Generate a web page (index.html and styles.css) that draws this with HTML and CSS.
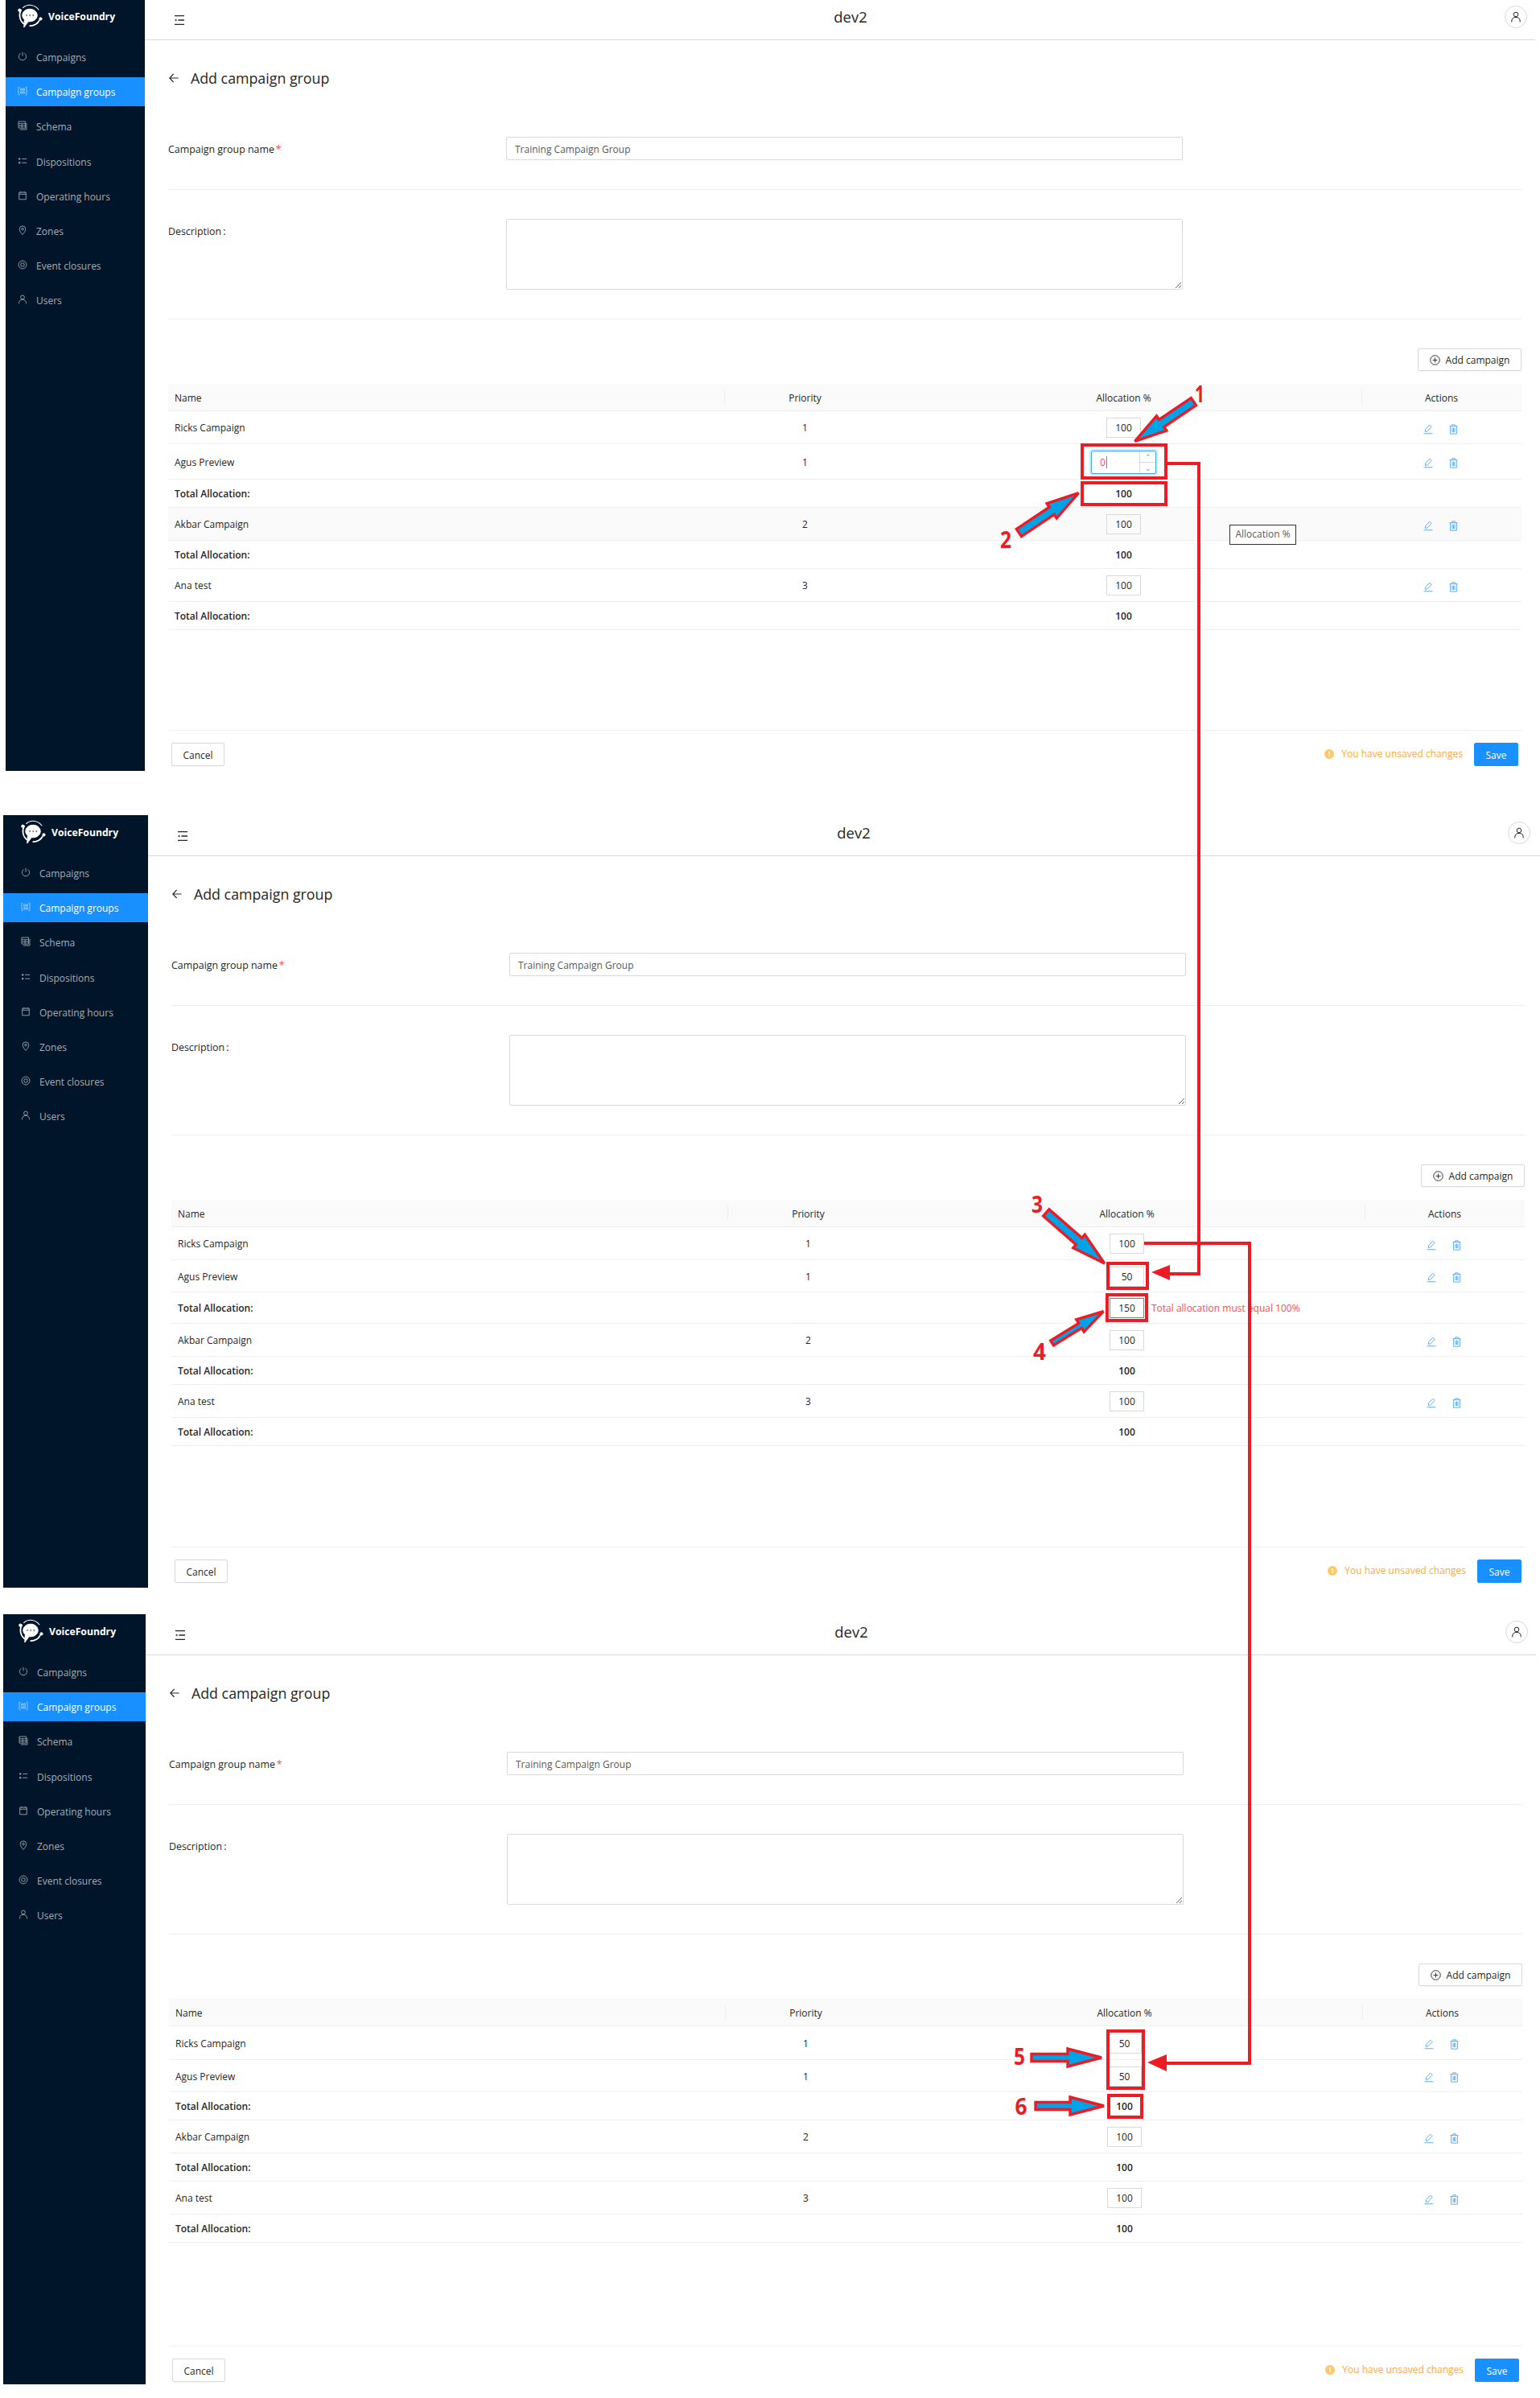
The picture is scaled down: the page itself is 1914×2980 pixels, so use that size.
FILE: index.html
```html
<!DOCTYPE html>
<html lang="en">
<head>
  <meta charset="UTF-8">
  <title>Add campaign group</title>
  <link rel="stylesheet" href="styles.css">
</head>
<body>

  <!-- ICONS -->
  <svg class="defs" width="0" height="0">
    <symbol id="i-logo" viewBox="0 0 32 30">
      <path d="M6.5 4.5 A13.5 13.5 0 0 1 27 7" fill="none" stroke="#fff" stroke-width="1.1"/>
      <path d="M4.5 6.5 C.8 13 2.5 21 8 25 M15 27.6 C21 28 26 24.5 28 20" fill="none" stroke="#fff" stroke-width="1.8"/>
      <path d="M15.5 6 C21 6 25 9.6 25 14 C25 18.4 21 22 15.5 22 L13.6 22 L8 29.5 L8.6 19.4 C6.8 18 6 16 6 14 C6 9.6 10 6 15.5 6 Z" fill="#fff"/>
      <circle cx="11.4" cy="14" r="1.3" fill="#001529"/>
      <circle cx="15.6" cy="14" r="1.3" fill="#001529"/>
      <circle cx="19.8" cy="14" r="1.3" fill="#001529"/>
      <circle cx="2.4" cy="7.5" r="1.7" fill="#fff"/>
      <circle cx="29.4" cy="18.5" r="1.7" fill="#fff"/>
    </symbol>
    <symbol id="i-power" viewBox="0 0 14 14">
      <path d="M4.2 2.6 A5.4 5.4 0 1 0 9.8 2.6 M7 1 V6.5"/>
    </symbol>
    <symbol id="i-groups" viewBox="0 0 14 14">
      <path d="M3 1.5 H1.2 V12.5 H3 M11 1.5 H12.8 V12.5 H11"/>
      <path d="M4.2 3.5 H6.2 V6 H4.2 Z M7.8 3.5 H9.8 V6 H7.8 Z M4.2 8 H6.2 V10.5 H4.2 Z M7.8 8 H9.8 V10.5 H7.8 Z"/>
    </symbol>
    <symbol id="i-schema" viewBox="0 0 14 14">
      <path d="M1.2 1.2 H11 V10.6 H1.2 Z M1.2 4.4 H11 M1.2 7.5 H11 M6 4.4 V10.6 M12.8 3.4 V12.8 H3.4"/>
    </symbol>
    <symbol id="i-list" viewBox="0 0 14 14">
      <path d="M6 4 H13 M6 9.6 H13"/>
      <rect x="1.4" y="2.8" width="2.4" height="2.4" fill="currentColor" stroke="none"/>
      <rect x="1.4" y="8.4" width="2.4" height="2.4" fill="currentColor" stroke="none"/>
    </symbol>
    <symbol id="i-cal" viewBox="0 0 14 14">
      <path d="M2 2.4 H12 V12.6 H2 Z M2 5 H12 M4.4 1 V3 M9.6 1 V3"/>
    </symbol>
    <symbol id="i-pin" viewBox="0 0 14 14">
      <path d="M7 13.4 C4.4 10.4 2.6 8 2.6 5.4 A4.4 4.4 0 0 1 11.4 5.4 C11.4 8 9.6 10.4 7 13.4 Z"/>
      <circle cx="7" cy="5.4" r="1.5"/>
    </symbol>
    <symbol id="i-target" viewBox="0 0 14 14">
      <circle cx="7" cy="7" r="5.8"/>
      <rect x="4.6" y="4.6" width="4.8" height="4.8" rx="1.2"/>
    </symbol>
    <symbol id="i-user" viewBox="0 0 14 14">
      <circle cx="7" cy="4" r="2.8"/>
      <path d="M1.8 13.4 V12 C1.8 9.2 4 7.4 7 7.4 C10 7.4 12.2 9.2 12.2 12 V13.4"/>
    </symbol>
    <symbol id="i-fold" viewBox="0 0 12 12">
      <path d="M0 .6 H12 M4.4 6 H12 M0 11.4 H12" stroke-width="1.3"/>
      <path d="M0 6 L2.4 4.4 V7.6 Z" fill="currentColor" stroke="none"/>
    </symbol>
    <symbol id="i-back" viewBox="0 0 12 12">
      <path d="M11.6 6 H.8 M5.6 1 L.8 6 L5.6 11" stroke-width="1.1"/>
    </symbol>
    <symbol id="i-plus" viewBox="0 0 14 14">
      <circle cx="7" cy="7" r="6.2"/>
      <path d="M7 3.8 V10.2 M3.8 7 H10.2"/>
    </symbol>
    <symbol id="i-edit" viewBox="0 0 13 13">
      <path d="M2.4 9.6 L2.8 6.6 L8.6 .8 L11 3.2 L5.2 9.2 Z M.6 12.2 H12.4"/>
    </symbol>
    <symbol id="i-trash" viewBox="0 0 12 14">
      <path d="M.6 2.8 H11.4 M4 2.6 V.8 H8 V2.6 M1.8 2.8 V13.2 H10.2 V2.8 M4.4 5 V11 M6 5 V11 M7.6 5 V11"/>
    </symbol>
  </svg>

  <!-- PANEL 1 -->
  <section class="panel panel-a">
    <aside class="side">
      <div class="brand"><svg class="logo"><use href="#i-logo"/></svg><span>VoiceFoundry</span></div>
      <ul class="menu">
        <li><svg class="ic"><use href="#i-power"/></svg>Campaigns</li>
        <li class="active"><svg class="ic"><use href="#i-groups"/></svg>Campaign groups</li>
        <li><svg class="ic"><use href="#i-schema"/></svg>Schema</li>
        <li><svg class="ic"><use href="#i-list"/></svg>Dispositions</li>
        <li><svg class="ic"><use href="#i-cal"/></svg>Operating hours</li>
        <li><svg class="ic"><use href="#i-pin"/></svg>Zones</li>
        <li><svg class="ic"><use href="#i-target"/></svg>Event closures</li>
        <li><svg class="ic"><use href="#i-user"/></svg>Users</li>
      </ul>
    </aside>
    <div class="main">
      <header class="top">
        <svg class="fold"><use href="#i-fold"/></svg>
        <div class="env">dev2</div>
        <div class="avatar"><svg><use href="#i-user"/></svg></div>
      </header>
      <div class="content">
        <h1 class="title"><svg class="back"><use href="#i-back"/></svg>Add campaign group</h1>
        <div class="field field-name">
          <label>Campaign group name<span class="req">*</span></label>
          <div class="input">Training Campaign Group</div>
        </div>
        <div class="field field-desc">
          <label>Description<span class="colon">:</span></label>
          <textarea></textarea>
        </div>
        <div class="tools"><div class="btn"><svg class="ic-plus"><use href="#i-plus"/></svg>Add campaign</div></div>
        <table class="grid">
          <thead>
            <tr><th>Name</th><th class="c sep">Priority</th><th class="c">Allocation %</th><th class="c sep">Actions</th></tr>
          </thead>
          <tbody>
            <tr class="h41"><td>Ricks Campaign</td><td class="c">1</td><td class="c"><span class="num">100</span></td><td class="c"><span class="acts"><svg class="edit"><use href="#i-edit"/></svg><svg class="trash"><use href="#i-trash"/></svg></span></td></tr>
            <tr class="h44"><td>Agus Preview</td><td class="c">1</td><td class="c"><span class="num-focus"><span class="val">0</span><span class="steps"><span>&#8963;</span><span>&#8964;</span></span></span></td><td class="c"><span class="acts"><svg class="edit"><use href="#i-edit"/></svg><svg class="trash"><use href="#i-trash"/></svg></span></td></tr>
            <tr class="h35 total"><td>Total Allocation:</td><td></td><td class="c">100</td><td></td></tr>
            <tr class="h41 hover"><td>Akbar Campaign</td><td class="c">2</td><td class="c"><span class="num">100</span></td><td class="c"><span class="acts"><svg class="edit"><use href="#i-edit"/></svg><svg class="trash"><use href="#i-trash"/></svg></span></td></tr>
            <tr class="h35 total"><td>Total Allocation:</td><td></td><td class="c">100</td><td></td></tr>
            <tr class="h41"><td>Ana test</td><td class="c">3</td><td class="c"><span class="num">100</span></td><td class="c"><span class="acts"><svg class="edit"><use href="#i-edit"/></svg><svg class="trash"><use href="#i-trash"/></svg></span></td></tr>
            <tr class="h35 total"><td>Total Allocation:</td><td></td><td class="c">100</td><td></td></tr>
          </tbody>
        </table>
        <footer class="foot">
          <div class="btn btn-cancel">Cancel</div>
          <div class="unsaved"><span class="warn">!</span>You have unsaved changes</div>
          <div class="btn btn-save">Save</div>
        </footer>
      </div>
    </div>
    <div class="tip">Allocation %</div>
  </section>

  <!-- PANEL 2 -->
  <section class="panel panel-b">
    <aside class="side">
      <div class="brand"><svg class="logo"><use href="#i-logo"/></svg><span>VoiceFoundry</span></div>
      <ul class="menu">
        <li><svg class="ic"><use href="#i-power"/></svg>Campaigns</li>
        <li class="active"><svg class="ic"><use href="#i-groups"/></svg>Campaign groups</li>
        <li><svg class="ic"><use href="#i-schema"/></svg>Schema</li>
        <li><svg class="ic"><use href="#i-list"/></svg>Dispositions</li>
        <li><svg class="ic"><use href="#i-cal"/></svg>Operating hours</li>
        <li><svg class="ic"><use href="#i-pin"/></svg>Zones</li>
        <li><svg class="ic"><use href="#i-target"/></svg>Event closures</li>
        <li><svg class="ic"><use href="#i-user"/></svg>Users</li>
      </ul>
    </aside>
    <div class="main">
      <header class="top">
        <svg class="fold"><use href="#i-fold"/></svg>
        <div class="env">dev2</div>
        <div class="avatar"><svg><use href="#i-user"/></svg></div>
      </header>
      <div class="content">
        <h1 class="title"><svg class="back"><use href="#i-back"/></svg>Add campaign group</h1>
        <div class="field field-name">
          <label>Campaign group name<span class="req">*</span></label>
          <div class="input">Training Campaign Group</div>
        </div>
        <div class="field field-desc">
          <label>Description<span class="colon">:</span></label>
          <textarea></textarea>
        </div>
        <div class="tools"><div class="btn"><svg class="ic-plus"><use href="#i-plus"/></svg>Add campaign</div></div>
        <table class="grid">
          <thead>
            <tr><th>Name</th><th class="c sep">Priority</th><th class="c">Allocation %</th><th class="c sep">Actions</th></tr>
          </thead>
          <tbody>
            <tr class="h41"><td>Ricks Campaign</td><td class="c">1</td><td class="c"><span class="num">100</span></td><td class="c"><span class="acts"><svg class="edit"><use href="#i-edit"/></svg><svg class="trash"><use href="#i-trash"/></svg></span></td></tr>
            <tr class="h40"><td>Agus Preview</td><td class="c">1</td><td class="c"><span class="num">50</span></td><td class="c"><span class="acts"><svg class="edit"><use href="#i-edit"/></svg><svg class="trash"><use href="#i-trash"/></svg></span></td></tr>
            <tr class="h39 total"><td>Total Allocation:</td><td></td><td class="c"><span class="num num-bad">150</span><span class="err">Total allocation must equal 100%</span></td><td></td></tr>
            <tr class="h41"><td>Akbar Campaign</td><td class="c">2</td><td class="c"><span class="num">100</span></td><td class="c"><span class="acts"><svg class="edit"><use href="#i-edit"/></svg><svg class="trash"><use href="#i-trash"/></svg></span></td></tr>
            <tr class="h35 total"><td>Total Allocation:</td><td></td><td class="c">100</td><td></td></tr>
            <tr class="h41"><td>Ana test</td><td class="c">3</td><td class="c"><span class="num">100</span></td><td class="c"><span class="acts"><svg class="edit"><use href="#i-edit"/></svg><svg class="trash"><use href="#i-trash"/></svg></span></td></tr>
            <tr class="h35 total"><td>Total Allocation:</td><td></td><td class="c">100</td><td></td></tr>
          </tbody>
        </table>
        <footer class="foot">
          <div class="btn btn-cancel">Cancel</div>
          <div class="unsaved"><span class="warn">!</span>You have unsaved changes</div>
          <div class="btn btn-save">Save</div>
        </footer>
      </div>
    </div>
  </section>

  <!-- PANEL 3 -->
  <section class="panel panel-c">
    <aside class="side">
      <div class="brand"><svg class="logo"><use href="#i-logo"/></svg><span>VoiceFoundry</span></div>
      <ul class="menu">
        <li><svg class="ic"><use href="#i-power"/></svg>Campaigns</li>
        <li class="active"><svg class="ic"><use href="#i-groups"/></svg>Campaign groups</li>
        <li><svg class="ic"><use href="#i-schema"/></svg>Schema</li>
        <li><svg class="ic"><use href="#i-list"/></svg>Dispositions</li>
        <li><svg class="ic"><use href="#i-cal"/></svg>Operating hours</li>
        <li><svg class="ic"><use href="#i-pin"/></svg>Zones</li>
        <li><svg class="ic"><use href="#i-target"/></svg>Event closures</li>
        <li><svg class="ic"><use href="#i-user"/></svg>Users</li>
      </ul>
    </aside>
    <div class="main">
      <header class="top">
        <svg class="fold"><use href="#i-fold"/></svg>
        <div class="env">dev2</div>
        <div class="avatar"><svg><use href="#i-user"/></svg></div>
      </header>
      <div class="content">
        <h1 class="title"><svg class="back"><use href="#i-back"/></svg>Add campaign group</h1>
        <div class="field field-name">
          <label>Campaign group name<span class="req">*</span></label>
          <div class="input">Training Campaign Group</div>
        </div>
        <div class="field field-desc">
          <label>Description<span class="colon">:</span></label>
          <textarea></textarea>
        </div>
        <div class="tools"><div class="btn"><svg class="ic-plus"><use href="#i-plus"/></svg>Add campaign</div></div>
        <table class="grid">
          <thead>
            <tr><th>Name</th><th class="c sep">Priority</th><th class="c">Allocation %</th><th class="c sep">Actions</th></tr>
          </thead>
          <tbody>
            <tr class="h42"><td>Ricks Campaign</td><td class="c">1</td><td class="c"><span class="num">50</span></td><td class="c"><span class="acts"><svg class="edit"><use href="#i-edit"/></svg><svg class="trash"><use href="#i-trash"/></svg></span></td></tr>
            <tr class="h40"><td>Agus Preview</td><td class="c">1</td><td class="c"><span class="num">50</span></td><td class="c"><span class="acts"><svg class="edit"><use href="#i-edit"/></svg><svg class="trash"><use href="#i-trash"/></svg></span></td></tr>
            <tr class="h35 total"><td>Total Allocation:</td><td></td><td class="c">100</td><td></td></tr>
            <tr class="h41"><td>Akbar Campaign</td><td class="c">2</td><td class="c"><span class="num">100</span></td><td class="c"><span class="acts"><svg class="edit"><use href="#i-edit"/></svg><svg class="trash"><use href="#i-trash"/></svg></span></td></tr>
            <tr class="h35 total"><td>Total Allocation:</td><td></td><td class="c">100</td><td></td></tr>
            <tr class="h41"><td>Ana test</td><td class="c">3</td><td class="c"><span class="num">100</span></td><td class="c"><span class="acts"><svg class="edit"><use href="#i-edit"/></svg><svg class="trash"><use href="#i-trash"/></svg></span></td></tr>
            <tr class="h35 total"><td>Total Allocation:</td><td></td><td class="c">100</td><td></td></tr>
          </tbody>
        </table>
        <footer class="foot">
          <div class="btn btn-cancel">Cancel</div>
          <div class="unsaved"><span class="warn">!</span>You have unsaved changes</div>
          <div class="btn btn-save">Save</div>
        </footer>
      </div>
    </div>
  </section>

  <!-- ANNOTATIONS drawn over the screenshots -->
  <svg class="notes" width="1914" height="2980" viewBox="0 0 1914 2980">
    <g class="boxes">
      <rect x="1345" y="553" width="104" height="41"/>
      <rect x="1345" y="600" width="104" height="27"/>
      <rect x="1377" y="1570" width="49" height="31"/>
      <rect x="1376" y="1609" width="49" height="32"/>
      <rect x="1377" y="2524" width="44" height="71"/>
      <rect x="1378" y="2604" width="41" height="27"/>
    </g>
    <g class="lines">
      <path d="M1451 576 H1490 V1583 H1454"/>
      <path d="M1422 1545 H1553 V2564 H1450"/>
    </g>
    <polygon class="head" points="1431,1581 1454,1572 1454,1591"/>
    <polygon class="head" points="1426,2563 1450,2553 1450,2574"/>
    <g class="arrows">
      <polygon transform="translate(1408 550) rotate(146)" points="-91,-5.5 -43,-5.5 -43,-11 -3,0 -43,11 -43,5.5 -91,5.5"/>
      <polygon transform="translate(1343 611) rotate(-33.7)" points="-92,-5.5 -43,-5.5 -43,-11 -3,0 -43,11 -43,5.5 -92,5.5"/>
      <polygon transform="translate(1375 1572) rotate(41)" points="-99,-5.5 -45,-5.5 -45,-11 -3,0 -45,11 -45,5.5 -99,5.5"/>
      <polygon transform="translate(1374 1628) rotate(-31.7)" points="-78,-3.5 -37,-3.5 -37,-9 -3,0 -37,9 -37,3.5 -78,3.5"/>
      <polygon transform="translate(1372 2557)" points="-90,-4.5 -45,-4.5 -45,-11 -3,0 -45,11 -45,4.5 -90,4.5"/>
      <polygon transform="translate(1375 2617)" points="-88,-4.5 -45,-4.5 -45,-11 -3,0 -45,11 -45,4.5 -88,4.5"/>
    </g>
    <g class="marks">
      <text x="1491" y="500" textLength="12" lengthAdjust="spacingAndGlyphs">1</text>
      <text x="1250" y="681" textLength="14" lengthAdjust="spacingAndGlyphs">2</text>
      <text x="1289" y="1507" textLength="14" lengthAdjust="spacingAndGlyphs">3</text>
      <text x="1292" y="1690" textLength="16" lengthAdjust="spacingAndGlyphs">4</text>
      <text x="1267" y="2566" textLength="14" lengthAdjust="spacingAndGlyphs">5</text>
      <text x="1269" y="2628" textLength="15" lengthAdjust="spacingAndGlyphs">6</text>
    </g>
  </svg>

</body>
</html>
```

FILE: styles.css
```css
* {
  box-sizing: border-box;
}
body {
  margin: 0;
  height: 2980px;
  position: relative;
  overflow: hidden;
  background: #fff;
  font-family: "Open Sans", "Noto Sans", sans-serif;
  font-size: 12px;
  color: #262626;
}
.defs {
  position: absolute;
}
svg {
  display: block;
  fill: none;
  stroke: currentColor;
  stroke-width: 1;
}

/* PANELS */
.panel {
  position: relative;
  display: flex;
}
.panel-a {
  --crop: 7px;
  height: 958px;
  margin-left: 7px;
  width: 1901px;
}
.panel-b {
  --crop: 0px;
  height: 960px;
  margin: 55px 0 0 4px;
  width: 1910px;
}
.panel-c {
  --crop: 3px;
  height: 957px;
  margin: 33px 0 0 4px;
  width: 1905px;
}
.panel-b .side,
.panel-b .main,
.panel-c .side,
.panel-c .main {
  padding-top: 1px;
}

/* SIDEBAR */
.side {
  width: calc(180px - var(--crop));
  flex: none;
  background: #001529;
  color: #a6adb4;
}
.brand {
  height: 53px;
  display: flex;
  padding: 5px 0 0 calc(22px - var(--crop));
  color: #fff;
  font-weight: 700;
  font-size: 12.2px;
}
.brand span {
  margin: 7px 0 0 7px;
}
.logo {
  width: 31px;
  height: 30px;
}
.menu {
  list-style: none;
  margin: 0;
  padding: 0;
}
.menu li {
  height: 36px;
  margin-bottom: 7.2px;
  display: flex;
  align-items: center;
  padding: 1px 0 0 calc(22px - var(--crop));
}
.menu .active {
  background: #1890ff;
  color: #fff;
}
.menu .ic {
  width: 12px;
  height: 12px;
  margin: -3px 11px 0 0;
}
.menu .active .ic {
  opacity: .6;
}

/* TOP BAR */
.main {
  flex: 1;
  min-width: 0;
  display: flex;
  flex-direction: column;
}
.top {
  height: 50px;
  flex: none;
  border-bottom: 1px solid #d9d9d9;
  position: relative;
}
.fold {
  position: absolute;
  left: 37px;
  top: 19px;
  width: 12px;
  height: 12px;
}
.env {
  text-align: center;
  font-size: 18.5px;
  line-height: 26px;
  padding: 8px 0 0 0;
  width: 1754px;
}
.avatar {
  position: absolute;
  left: 1690px;
  top: 7px;
  width: 28px;
  height: 28px;
  border: 1px solid #d9d9d9;
  border-radius: 50%;
  padding: 6px;
}
.avatar svg {
  width: 14px;
  height: 14px;
}

/* FORM */
.content {
  flex: 1;
  display: flex;
  flex-direction: column;
  padding: 32px 0 0 29px;
  width: 1711px;
}
.title {
  display: flex;
  align-items: center;
  margin: 0;
  height: 30px;
  font-size: 17.8px;
  font-weight: 400;
  line-height: 30px;
}
.back {
  width: 12px;
  height: 12px;
  margin: 0 15px 0 1px;
}
.field {
  display: grid;
  grid-template-columns: 420px 841px;
  border-bottom: 1px solid #efefef;
  padding-bottom: 36px;
}
.field-name {
  margin-top: 58px;
}
.field-desc {
  padding-top: 36px;
}
.field label {
  font-size: 12.4px;
  font-weight: 500;
  line-height: 17px;
  padding-top: 7px;
}
.req {
  color: #ff4d4f;
  margin-left: 2px;
}
.colon {
  margin-left: 2px;
}
.input {
  height: 29px;
  border: 1px solid #d9d9d9;
  border-radius: 2px;
  padding: 1px 10px 0;
  line-height: 27px;
  color: #595959;
}
textarea {
  display: block;
  width: 841px;
  height: 88px;
  margin: 0;
  border: 1px solid #d9d9d9;
  border-radius: 2px;
  outline: none;
  background: #fff;
  resize: vertical;
}

/* TABLE */
.tools {
  display: flex;
  justify-content: flex-end;
  margin-top: 36px;
}
.btn {
  height: 29px;
  border: 1px solid #d9d9d9;
  border-radius: 2px;
  background: #fff;
  box-shadow: 0 1px 0 rgba(0, 0, 0, .03);
  display: flex;
  align-items: center;
  justify-content: center;
  padding-top: 1px;
}
.tools .btn {
  width: 129px;
  height: 28px;
}
.ic-plus {
  width: 13px;
  height: 13px;
  margin-right: 7px;
}
.grid {
  width: 1682px;
  margin-top: 16px;
  table-layout: fixed;
  border-collapse: separate;
  border-spacing: 0;
}
.grid th:nth-child(1) { width: 691px; }
.grid th:nth-child(2) { width: 201px; }
.grid th:nth-child(3) { width: 591px; }
.grid th:nth-child(4) { width: 199px; }
.grid th,
.grid td {
  padding: 1px 0 0 8px;
  text-align: left;
  border-bottom: 1px solid #efefef;
}
.grid .c {
  text-align: center;
  padding: 1px 0 0 0;
}
.grid th {
  height: 34px;
  background: #fafafa;
  font-weight: 500;
  position: relative;
}
.grid .sep::before {
  content: "";
  position: absolute;
  left: 0;
  top: 7px;
  height: 19px;
  width: 1px;
  background: #efefef;
}
.h35 td { height: 35px; }
.h39 td { height: 39px; }
.h40 td { height: 40px; }
.h41 td { height: 41px; }
.h42 td { height: 42px; }
.h44 td { height: 44px; }
.total td {
  font-weight: 600;
}
.hover td {
  background: #fafafa;
}
.grid td .num {
  display: inline-block;
  width: 43px;
  height: 25px;
  line-height: 23px;
  border: 1px solid #d9d9d9;
  vertical-align: middle;
  font-weight: 400;
}
.grid td .num-bad {
  border-color: #ff4d4f;
  font-weight: 500;
}
.grid td:nth-child(3) {
  position: relative;
}
.err {
  position: absolute;
  left: 326px;
  top: 11px;
  color: #ff4d4f;
  font-weight: 400;
  white-space: nowrap;
}
.num-focus {
  display: inline-flex;
  vertical-align: middle;
  width: 81px;
  height: 29px;
  border: 1px solid #40a9ff;
  border-radius: 2px;
  box-shadow: 0 0 0 2px rgba(24, 144, 255, .2);
  text-align: left;
}
.val {
  flex: 1;
  color: #ff4d4f;
  line-height: 27px;
  padding-left: 10px;
}
.val::after {
  content: "";
  display: inline-block;
  width: 1px;
  height: 15px;
  margin-left: 1px;
  vertical-align: -3px;
  background: #ff4d4f;
}
.steps {
  width: 20px;
  border-left: 1px solid #d9d9d9;
  display: flex;
  flex-direction: column;
  color: #8c8c8c;
  font-size: 9px;
  line-height: 13px;
  text-align: center;
}
.steps span {
  flex: 1;
}
.steps span + span {
  border-top: 1px solid #d9d9d9;
}
.acts {
  display: flex;
  justify-content: center;
  align-items: center;
  gap: 20px;
  color: #4ea5f7;
  padding: 3px 3px 0 0;
}
.edit {
  width: 12px;
  height: 13px;
}
.trash {
  width: 11px;
  height: 13px;
}

/* FOOTER */
.foot {
  margin-top: auto;
  border-top: 1px solid #efefef;
  padding-top: 15px;
  height: 51px;
  display: flex;
  align-items: flex-start;
}
.panel-c .foot {
  height: 48px;
}
.btn-cancel {
  width: 66px;
  margin-left: 4px;
}
.unsaved {
  margin-left: auto;
  color: #ffa940;
  display: flex;
  align-items: center;
  height: 27px;
}
.warn {
  width: 12px;
  height: 12px;
  border-radius: 50%;
  background: #ffc868;
  color: #fff;
  font-size: 9px;
  font-weight: 700;
  line-height: 12px;
  text-align: center;
  margin-right: 9px;
}
.btn-save {
  width: 55px;
  margin: 0 4px 0 14px;
  border-color: #1890ff;
  background: #1890ff;
  color: #fff;
}

/* TOOLTIP, ANNOTATIONS */
.tip {
  position: absolute;
  left: 1521px;
  top: 652px;
  width: 83px;
  height: 25px;
  border: 1.5px solid #333;
  background: #fff;
  color: #595959;
  line-height: 22px;
  text-align: center;
}
.notes {
  position: absolute;
  left: 0;
  top: 0;
  stroke: none;
}
.boxes rect,
.lines path {
  fill: none;
  stroke: #ed1c24;
  stroke-width: 4;
}
.head {
  fill: #ed1c24;
  stroke: none;
}
.arrows polygon {
  fill: #00a2e8;
  stroke: #ed1c24;
  stroke-width: 3.4;
  stroke-miterlimit: 3;
}
.marks text {
  fill: #ed1c24;
  stroke: none;
  font-family: "Noto Sans", sans-serif;
  font-size: 29px;
  font-weight: 700;
  text-anchor: middle;
}
```
